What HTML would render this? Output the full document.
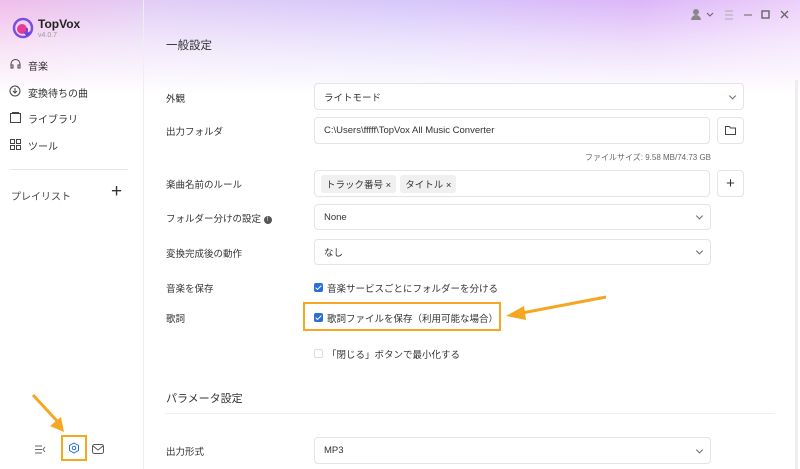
<!DOCTYPE html>
<html><head><meta charset="utf-8"><style>
*{margin:0;padding:0;box-sizing:border-box}
body{width:800px;height:469px;overflow:hidden;font-family:"Liberation Sans","Noto Sans CJK JP",sans-serif;color:#333;background:#fff;position:relative}
.bg{position:absolute;left:0;top:0;width:800px;height:469px;background:linear-gradient(180deg,rgba(255,255,255,0) 0,rgba(255,255,255,.55) 45px,#fff 95px),linear-gradient(90deg,#f0bdea 0,#e2cdf6 20%,#d6c8fb 50%,#dcb6f8 80%,#ecd0fa 100%)}
.side{position:absolute;left:0;top:0;width:144px;height:469px;border-right:1px solid #eee}
.a{position:absolute;font-size:10px;white-space:nowrap}
.box{position:absolute;border:1px solid #e4e4e4;border-radius:4px;background:#fff;font-size:9.5px;padding-left:9px;display:flex;align-items:center}
.chev{position:absolute;right:8px;top:50%;width:5px;height:5px;border-right:1px solid #666;border-bottom:1px solid #666;transform:translateY(-70%) rotate(45deg)}
.tag{display:inline-block;background:#f0f0f0;border-radius:3px;padding:2px 5px;margin-right:4px;font-size:9.5px}
.cb{position:absolute;width:9px;height:9px;border-radius:2px;background:#2a6fd6}
.cb:after{content:"";position:absolute;left:3px;top:1px;width:2px;height:5px;border-right:1.3px solid #fff;border-bottom:1.3px solid #fff;transform:rotate(45deg)}
</style></head><body>
<div class="bg"></div>
<div class="side">
<svg style="position:absolute;left:12px;top:17px" width="22" height="22" viewBox="0 0 22 22"><circle cx="11" cy="11" r="9" fill="none" stroke="#7a4fe0" stroke-width="2.5"/><circle cx="10" cy="12" r="5" fill="#e83a9a"/><path d="M15 11v7m-3-3l3 3 3-3" stroke="#6a3fe0" stroke-width="1.8" fill="none"/></svg>
<div class="a" style="left:38px;top:17px;font-size:12px;font-weight:bold;color:#222">TopVox</div>
<div class="a" style="left:38px;top:32px;font-size:7px;color:#999">v4.0.7</div>
<svg style="position:absolute;left:10px;top:59px" width="11" height="10" viewBox="0 0 11 10"><path d="M1 8V5a4.5 4.5 0 0 1 9 0v3M1 6h2v3H1zM8 6h2v3H8z" fill="none" stroke="#444" stroke-width="1"/></svg>
<div class="a" style="left:28px;top:58px">音楽</div>
<svg style="position:absolute;left:9px;top:85px" width="12" height="12"><circle cx="6" cy="6" r="5" fill="none" stroke="#444"/><path d="M6 3v5M4 6l2 2 2-2" fill="none" stroke="#444"/></svg>
<div class="a" style="left:28px;top:85px">変換待ちの曲</div>
<svg style="position:absolute;left:10px;top:112px" width="11" height="11"><rect x="0.5" y="1.5" width="10" height="9" fill="none" stroke="#444"/><path d="M2 .5h7" stroke="#444"/></svg>
<div class="a" style="left:28px;top:111px">ライブラリ</div>
<svg style="position:absolute;left:10px;top:139px" width="11" height="11"><rect x=".5" y=".5" width="4" height="4" fill="none" stroke="#444"/><rect x="6.5" y=".5" width="4" height="4" fill="none" stroke="#444"/><rect x=".5" y="6.5" width="4" height="4" fill="none" stroke="#444"/><rect x="6.5" y="6.5" width="4" height="4" fill="none" stroke="#444"/></svg>
<div class="a" style="left:28px;top:138px">ツール</div>
<div style="position:absolute;left:10px;top:169px;width:118px;height:1px;background:#e6e6e6"></div>
<div class="a" style="left:11px;top:188px;color:#444">プレイリスト</div>
<div class="a" style="left:111px;top:181px;font-size:19px;font-weight:300">+</div>
<svg style="position:absolute;left:35px;top:445px" width="11" height="9"><path d="M0 1h7M0 4.5h7M0 8h7M10 2L8 4.5 10 7" fill="none" stroke="#666"/></svg>
<div style="position:absolute;left:61px;top:435px;width:26px;height:26px;border:2.5px solid #f5a623"></div>
<svg style="position:absolute;left:68px;top:442px" width="12" height="12"><path d="M6 1l4.5 2.5v5L6 11 1.5 8.5v-5z" fill="none" stroke="#2a6fd6"/><circle cx="6" cy="6" r="1.7" fill="none" stroke="#2a6fd6"/></svg>
<svg style="position:absolute;left:92px;top:444px" width="12" height="10"><rect x=".5" y=".5" width="11" height="9" rx="2" fill="none" stroke="#555"/><path d="M1 2l5 4 5-4" fill="none" stroke="#555"/></svg>
</div>
<svg style="position:absolute;left:690px;top:8px" width="108" height="14"><circle cx="6" cy="4" r="3" fill="#888"/><path d="M1 12a5 5 0 0 1 10 0z" fill="#888"/><path d="M17 5l3 3 3-3" fill="none" stroke="#666"/><path d="M35 3h8M35 7h8M35 11h8" stroke="#aaa"/><path d="M54 7h8" stroke="#666"/><rect x="72" y="3" width="7" height="7" fill="none" stroke="#666" stroke-width="1.4"/><path d="M91 3l7 7M98 3l-7 7" stroke="#666" stroke-width="1.3"/></svg>
<div class="a" style="left:166px;top:37px;font-size:11.5px">一般設定</div>
<div class="a" style="left:166px;top:91px;font-size:9.5px">外観</div>
<div class="box" style="left:314px;top:83px;width:430px;height:27px">ライトモード<span class="chev"></span></div>
<div class="a" style="left:166px;top:124px;font-size:9.5px">出力フォルダ</div>
<div class="box" style="left:314px;top:117px;width:396px;height:27px">C:\Users\fffff\TopVox All Music Converter</div>
<div class="box" style="left:717px;top:117px;width:27px;height:27px;padding:0;justify-content:center"><svg width="11" height="9"><path d="M.5 .5h4l1 1.5h5v6.5h-10z" fill="none" stroke="#444"/></svg></div>
<div class="a" style="left:585px;top:152px;font-size:8px;color:#666">ファイルサイズ: 9.58 MB/74.73 GB</div>
<div class="a" style="left:166px;top:177px;font-size:9.5px">楽曲名前のルール</div>
<div class="box" style="left:314px;top:170px;width:396px;height:27px;padding-left:6px"><span class="tag">トラック番号 ×</span><span class="tag">タイトル ×</span></div>
<div class="box" style="left:717px;top:170px;width:27px;height:27px;padding:0;justify-content:center;font-size:15px">+</div>
<div class="a" style="left:166px;top:211px;font-size:9.5px">フォルダー分けの設定 <span style="display:inline-block;width:8px;height:8px;border-radius:50%;background:#555;color:#fff;font-size:6px;text-align:center;line-height:8px;vertical-align:1px">!</span></div>
<div class="box" style="left:314px;top:204px;width:397px;height:26px">None<span class="chev"></span></div>
<div class="a" style="left:166px;top:246px;font-size:9.5px">変換完成後の動作</div>
<div class="box" style="left:314px;top:239px;width:397px;height:26px">なし<span class="chev"></span></div>
<div class="a" style="left:166px;top:281px;font-size:9.5px">音楽を保存</div>
<div class="cb" style="left:314px;top:283px"></div>
<div class="a" style="left:327px;top:281px;font-size:9.5px">音楽サービスごとにフォルダーを分ける</div>
<div class="a" style="left:166px;top:311px;font-size:9.5px">歌詞</div>
<div style="position:absolute;left:303px;top:302px;width:198px;height:29px;border:2.5px solid #f5a623"></div>
<div class="cb" style="left:314px;top:313px"></div>
<div class="a" style="left:327px;top:311px;font-size:9.5px">歌詞ファイルを保存（利用可能な場合）</div>
<div style="position:absolute;left:314px;top:349px;width:9px;height:9px;border:1px solid #ddd;border-radius:2px"></div>
<div class="a" style="left:327px;top:347px;font-size:9.5px">「閉じる」ボタンで最小化する</div>
<div class="a" style="left:166px;top:390px;font-size:11px">パラメータ設定</div>
<div style="position:absolute;left:165px;top:413px;width:610px;height:1px;background:#eee"></div>
<div class="a" style="left:166px;top:444px;font-size:9.5px">出力形式</div>
<div class="box" style="left:314px;top:437px;width:397px;height:27px">MP3<span class="chev"></span></div>
<div style="position:absolute;left:795px;top:80px;width:3px;height:389px;background:#eee"></div>
<svg style="position:absolute;left:0;top:0" width="800" height="469"><path d="M606 297L522 313" stroke="#f5a623" stroke-width="3"/><path d="M506 316l18-10 2 14z" fill="#f5a623"/><path d="M33 395L58 422" stroke="#f5a623" stroke-width="3"/><path d="M64 432l-14-6 11-9z" fill="#f5a623"/></svg>
</body></html>
